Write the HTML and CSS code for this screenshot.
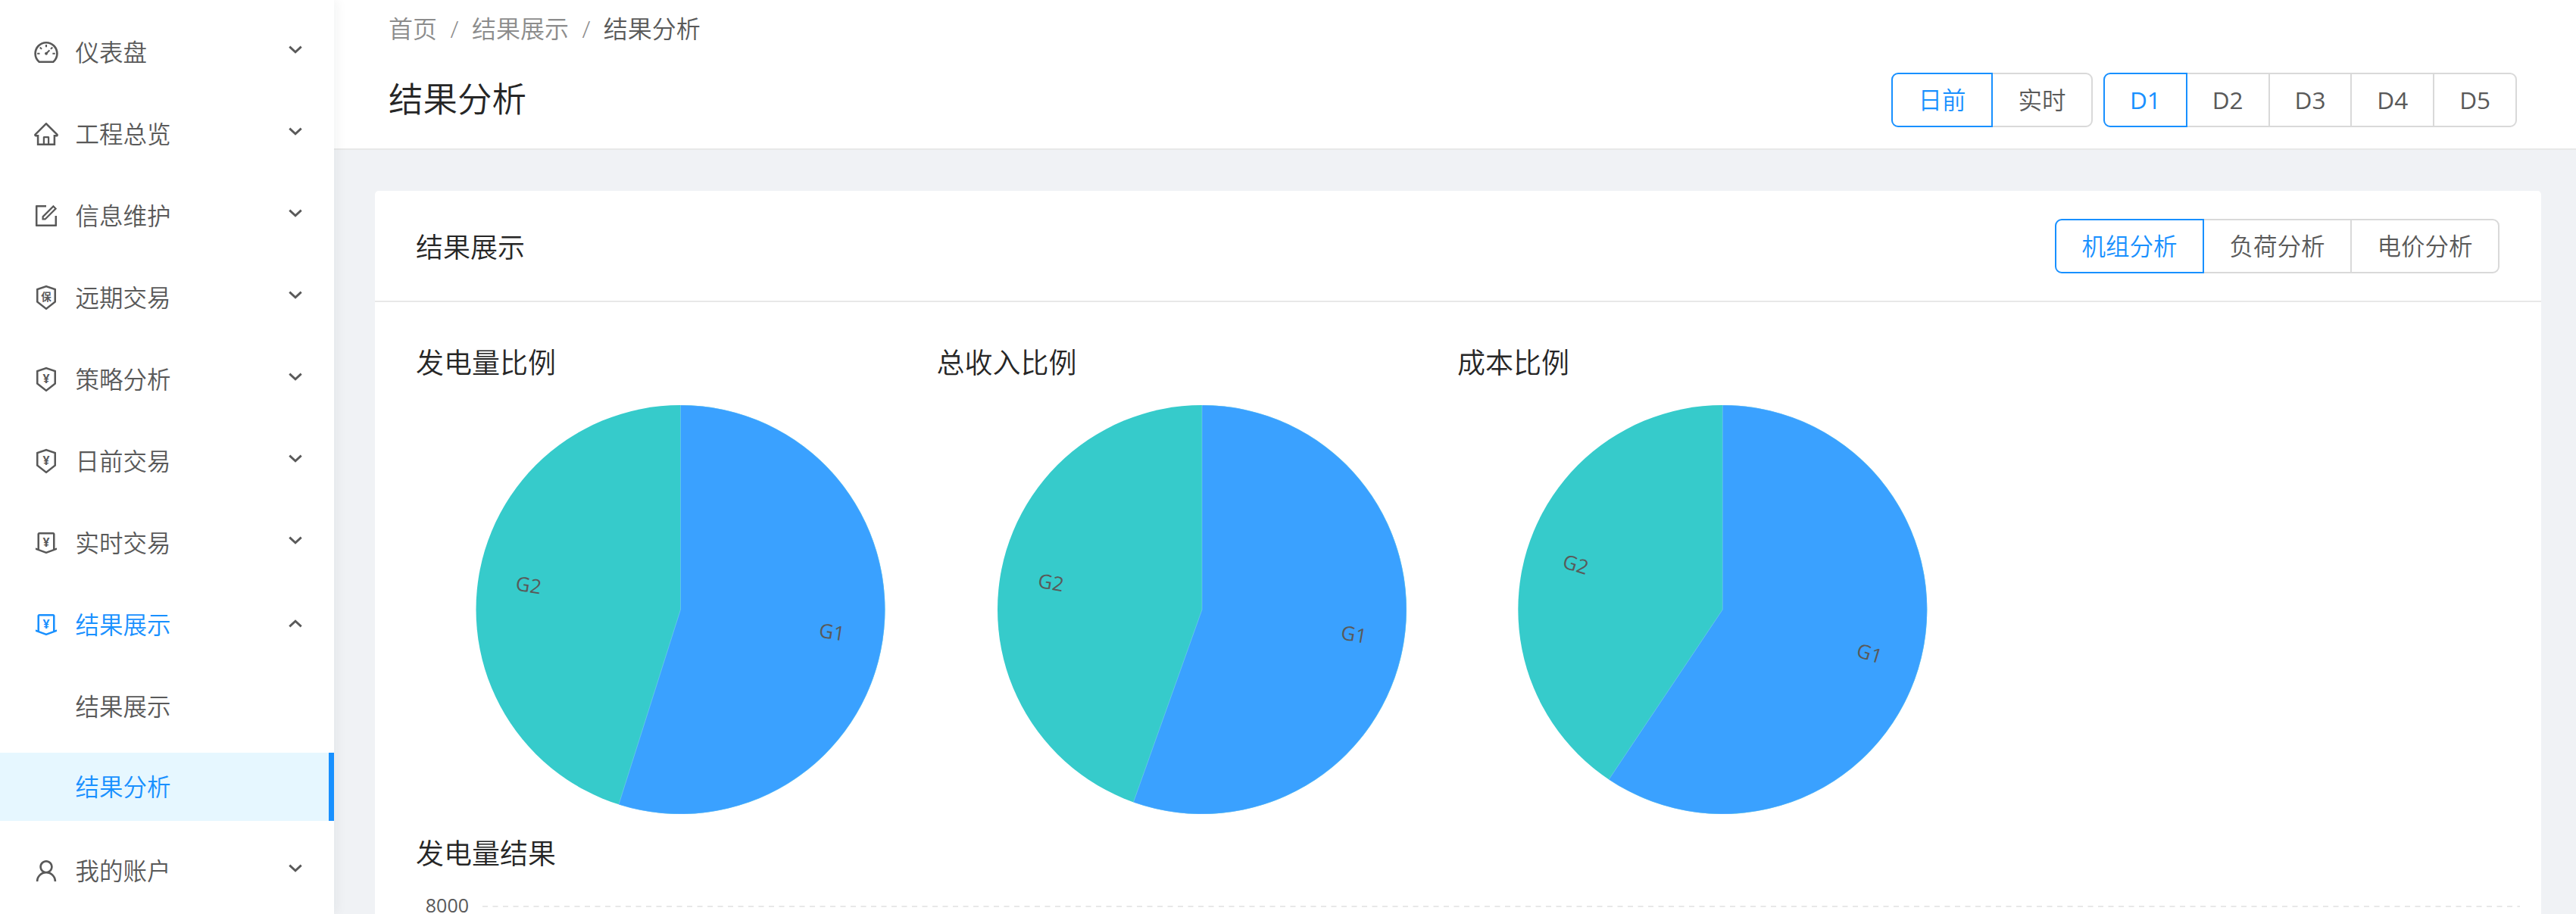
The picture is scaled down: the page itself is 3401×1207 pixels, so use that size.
FILE: index.html
```html
<!DOCTYPE html>
<html lang="en">
<head>
    <meta charset="UTF-8">
    <meta name="viewport" content="width=device-width, initial-scale=1.0">
    <title>结果分析</title>
    <link rel="stylesheet" href="styles.css">
</head>
<body>
    <!-- icon set, reused through <use> -->
    <svg class="icon-defs" xmlns="http://www.w3.org/2000/svg">
        <symbol id="i-dashboard" viewBox="0 0 1024 1024">
            <path d="M924.8 385.6a446.7 446.7 0 0 0-96-142.4 446.7 446.7 0 0 0-142.4-96C631.1 123.8 572.5 112 512 112s-119.1 11.8-174.4 35.2a446.7 446.7 0 0 0-142.4 96 446.7 446.7 0 0 0-96 142.4C75.8 440.9 64 499.5 64 560c0 132.7 58.3 257.7 159.9 343.1l1.7 1.4c5.8 4.8 13.1 7.5 20.6 7.5h531.7c7.5 0 14.8-2.7 20.6-7.5l1.7-1.4C901.7 817.7 960 692.7 960 560c0-60.5-11.9-119.1-35.2-174.4zM761.4 836H262.6A371.12 371.12 0 0 1 140 560c0-99.4 38.7-192.8 109-263 70.3-70.3 163.7-109 263-109 99.4 0 192.8 38.7 263 109 70.3 70.3 109 163.7 109 263 0 105.6-44.5 205.5-122.6 276z"/>
            <path d="M623.5 421.5a8.03 8.03 0 0 0-11.3 0L527.7 506c-18.7-5-39.4-.2-54.1 14.5a55.95 55.95 0 0 0 0 79.2 55.95 55.95 0 0 0 79.2 0 55.87 55.87 0 0 0 14.5-54.1l84.5-84.5c3.1-3.1 3.1-8.2 0-11.3l-28.3-28.3zM490 320h44c4.4 0 8-3.6 8-8v-80c0-4.4-3.6-8-8-8h-44c-4.4 0-8 3.6-8 8v80c0 4.4 3.6 8 8 8zm260 218v44c0 4.4 3.6 8 8 8h80c4.4 0 8-3.6 8-8v-44c0-4.4-3.6-8-8-8h-80c-4.4 0-8 3.6-8 8zm12.7-197.2l-31.1-31.1a8.03 8.03 0 0 0-11.3 0l-56.6 56.6a8.03 8.03 0 0 0 0 11.3l31.1 31.1c3.1 3.1 8.2 3.1 11.3 0l56.6-56.6c3.1-3.1 3.1-8.2 0-11.3zm-458.6-31.1a8.03 8.03 0 0 0-11.3 0l-31.1 31.1a8.03 8.03 0 0 0 0 11.3l56.6 56.6c3.1 3.1 8.2 3.1 11.3 0l31.1-31.1c3.1-3.1 3.1-8.2 0-11.3l-56.6-56.6zM262 530h-80c-4.4 0-8 3.6-8 8v44c0 4.4 3.6 8 8 8h80c4.4 0 8-3.6 8-8v-44c0-4.4-3.6-8-8-8z"/>
        </symbol>
        <symbol id="i-home" viewBox="0 0 1024 1024">
            <path d="M946.5 505L560.1 118.8l-25.9-25.9a31.5 31.5 0 0 0-44.4 0L77.5 505a63.9 63.9 0 0 0-18.8 46c.4 35.2 29.7 63.3 64.9 63.3h42.5V940h691.8V614.3h43.4c17.1 0 33.2-6.7 45.3-18.8a63.6 63.6 0 0 0 18.7-45.3c0-17-6.7-33.1-18.8-45.2zM568 868H456V664h112v204zm217.9-325.7V868H632V640c0-22.1-17.9-40-40-40H432c-22.1 0-40 17.9-40 40v228H238.1V542.3h-96l370-369.7 23.1 23.1L882 542.3h-96.1z"/>
        </symbol>
        <symbol id="i-form" viewBox="0 0 1024 1024">
            <path d="M904 512h-56c-4.4 0-8 3.6-8 8v320H184V184h320c4.4 0 8-3.6 8-8v-56c0-4.4-3.6-8-8-8H144c-17.7 0-32 14.3-32 32v736c0 17.7 14.3 32 32 32h736c17.7 0 32-14.3 32-32V520c0-4.4-3.6-8-8-8z"/>
            <path d="M355.9 534.9L354 653.8c-.1 8.9 7.1 16.2 16 16.2h.4l118-2.9c2-.1 4-.9 5.4-2.3l415.9-415c3.1-3.1 3.1-8.2 0-11.3L785.4 114.3c-1.6-1.6-3.6-2.3-5.7-2.3s-4.1.8-5.7 2.3l-415.8 415a8.3 8.3 0 0 0-2.3 5.6zm63.5 23.6L779.7 199l45.2 45.1-360.5 359.7-45.7 1.1.7-46.4z"/>
        </symbol>
        <symbol id="i-shield-top" viewBox="0 0 1024 1024">
            <path d="M866.9 169.9L527.1 54.1C523 52.7 517.5 52 512 52s-11 .7-15.1 2.1L157.1 169.9c-8.3 2.8-15.1 12.4-15.1 21.2v482.4c0 8.8 5.7 20.4 12.6 25.9L499.3 968c3.5 2.7 8 4.1 12.6 4.1s9.2-1.4 12.6-4.1l344.7-268.6c6.9-5.4 12.6-17 12.6-25.9V191.1c.2-8.8-6.6-18.3-14.9-21.2zM810 654.3L512 886.5 214 654.3V226.7l298-101.6 298 101.6v427.6z"/>
        </symbol>
        <symbol id="i-collect" viewBox="0 0 1024 1024">
            <path d="M911.5 700.7a8 8 0 0 0-10.3-4.8L840 718.2V180c0-37.6-30.4-68-68-68H252c-37.6 0-68 30.4-68 68v538.2l-61.3-22.3c-.9-.3-1.8-.5-2.7-.5-4.4 0-8 3.6-8 8V763c0 3.3 2.1 6.3 5.3 7.5L501 910.1c7.1 2.6 14.8 2.6 21.9 0l383.8-139.5c3.2-1.2 5.3-4.2 5.3-7.5v-59.6c0-1-.2-1.9-.5-2.8zM512 837.5l-256-93.1V184h512v560.4l-256 93.1z"/>
        </symbol>
        <symbol id="i-user" viewBox="0 0 1024 1024">
            <path d="M858.5 763.6a374 374 0 0 0-80.6-119.5 375.63 375.63 0 0 0-119.5-80.6c-.4-.2-.8-.3-1.2-.5C719.5 518 760 444.7 760 362c0-137-111-248-248-248S264 225 264 362c0 82.7 40.5 156 102.8 201.1-.4.2-.8.3-1.2.5-44.8 18.9-85 46-119.5 80.6a375.63 375.63 0 0 0-80.6 119.5A371.7 371.7 0 0 0 136 901.8a8 8 0 0 0 8 8.2h60c4.4 0 7.9-3.5 8-7.8 2-77.2 33-149.5 87.8-204.3 56.7-56.7 132-87.9 212.2-87.9s155.5 31.2 212.2 87.9C779 752.7 810 825 812 902.2c.1 4.4 3.6 7.8 8 7.8h60a8 8 0 0 0 8-8.2c-1-47.8-10.9-94.3-29.5-138.2zM512 534c-45.9 0-89.1-17.9-121.6-50.4S340 407.9 340 362c0-45.9 17.9-89.1 50.4-121.6S466.1 190 512 190s89.1 17.9 121.6 50.4S684 316.1 684 362c0 45.9-17.9 89.1-50.4 121.6S557.9 534 512 534z"/>
        </symbol>
        <symbol id="i-down" viewBox="0 0 16 10">
            <polyline points="1,1.5 8,8 15,1.5" fill="none" stroke="currentColor" stroke-width="2.6"/>
        </symbol>
        <symbol id="i-up" viewBox="0 0 16 10">
            <polyline points="1,8.5 8,2 15,8.5" fill="none" stroke="currentColor" stroke-width="2.6"/>
        </symbol>
    </svg>

    <div class="app">
        <aside class="sidebar">
            <nav class="menu">
                <div class="menu-row">
                    <svg class="menu-icon"><use href="#i-dashboard"/></svg>
                    <span class="menu-label">仪表盘</span>
                    <svg class="menu-arrow"><use href="#i-down"/></svg>
                </div>
                <div class="menu-row">
                    <svg class="menu-icon"><use href="#i-home"/></svg>
                    <span class="menu-label">工程总览</span>
                    <svg class="menu-arrow"><use href="#i-down"/></svg>
                </div>
                <div class="menu-row">
                    <svg class="menu-icon"><use href="#i-form"/></svg>
                    <span class="menu-label">信息维护</span>
                    <svg class="menu-arrow"><use href="#i-down"/></svg>
                </div>
                <div class="menu-row">
                    <svg class="menu-icon" viewBox="0 0 32 32"><use href="#i-shield-top" width="32" height="32"/><text class="icon-char icon-char-small" x="16" y="19.5">保</text></svg>
                    <span class="menu-label">远期交易</span>
                    <svg class="menu-arrow"><use href="#i-down"/></svg>
                </div>
                <div class="menu-row">
                    <svg class="menu-icon" viewBox="0 0 32 32"><use href="#i-shield-top" width="32" height="32"/><text class="icon-char" x="16" y="20.5">¥</text></svg>
                    <span class="menu-label">策略分析</span>
                    <svg class="menu-arrow"><use href="#i-down"/></svg>
                </div>
                <div class="menu-row">
                    <svg class="menu-icon" viewBox="0 0 32 32"><use href="#i-shield-top" width="32" height="32"/><text class="icon-char" x="16" y="20.5">¥</text></svg>
                    <span class="menu-label">日前交易</span>
                    <svg class="menu-arrow"><use href="#i-down"/></svg>
                </div>
                <div class="menu-row">
                    <svg class="menu-icon" viewBox="0 0 32 32"><use href="#i-collect" width="32" height="32"/><text class="icon-char" x="16" y="20.5">¥</text></svg>
                    <span class="menu-label">实时交易</span>
                    <svg class="menu-arrow"><use href="#i-down"/></svg>
                </div>
                <div class="menu-row menu-row-open">
                    <svg class="menu-icon" viewBox="0 0 32 32"><use href="#i-collect" width="32" height="32"/><text class="icon-char" x="16" y="20.5">¥</text></svg>
                    <span class="menu-label">结果展示</span>
                    <svg class="menu-arrow menu-arrow-up"><use href="#i-up"/></svg>
                </div>
                <div class="menu-sub">
                    <div class="menu-row sub-row">
                        <span class="menu-label">结果展示</span>
                    </div>
                    <div class="menu-row sub-row sub-row-active">
                        <span class="menu-label">结果分析</span>
                    </div>
                </div>
                <div class="menu-row">
                    <svg class="menu-icon"><use href="#i-user"/></svg>
                    <span class="menu-label">我的账户</span>
                    <svg class="menu-arrow"><use href="#i-down"/></svg>
                </div>
            </nav>
        </aside>

        <div class="main">
            <header class="page-header">
                <div class="breadcrumb">
                    <span>首页</span><span class="crumb-sep">/</span><span>结果展示</span><span class="crumb-sep">/</span><span class="crumb-last">结果分析</span>
                </div>
                <div class="title-row">
                    <h1 class="page-title">结果分析</h1>
                    <div class="toolbar">
                        <div class="btn-group">
                            <span class="btn btn-active">日前</span>
                            <span class="btn">实时</span>
                        </div>
                        <div class="btn-group">
                            <span class="btn btn-day btn-active">D1</span>
                            <span class="btn btn-day">D2</span>
                            <span class="btn btn-day">D3</span>
                            <span class="btn btn-day">D4</span>
                            <span class="btn btn-day">D5</span>
                        </div>
                    </div>
                </div>
            </header>

            <section class="content">
                <div class="card">
                    <div class="card-head">
                        <span class="card-title">结果展示</span>
                        <div class="btn-group">
                            <span class="btn btn-wide btn-active">机组分析</span>
                            <span class="btn btn-wide">负荷分析</span>
                            <span class="btn btn-wide">电价分析</span>
                        </div>
                    </div>
                    <div class="card-body">
                        <div class="pie-grid">
                            <div class="pie-col">
                                <div class="section-title">发电量比例</div>
                                <svg class="pie" viewBox="-349.5 -280 687.5 560">
                                    <circle class="slice-b" r="270"/>
                                    <path class="slice-a" d="M0 0L0 -270A270 270 0 1 1 -81.6 257.4Z"/>
                                    <text class="pie-label" transform="translate(200 29) rotate(8.8)">G1</text>
                                    <text class="pie-label" transform="translate(-200.5 -33) rotate(8.8)">G2</text>
                                </svg>
                            </div>
                            <div class="pie-col">
                                <div class="section-title">总收入比例</div>
                                <svg class="pie" viewBox="-350 -280 687.5 560">
                                    <circle class="slice-b" r="270"/>
                                    <path class="slice-a" d="M0 0L0 -270A270 270 0 1 1 -90.6 254.4Z"/>
                                    <text class="pie-label" transform="translate(200.6 32) rotate(9.8)">G1</text>
                                    <text class="pie-label" transform="translate(-199.4 -36.5) rotate(9.8)">G2</text>
                                </svg>
                            </div>
                            <div class="pie-col">
                                <div class="section-title">成本比例</div>
                                <svg class="pie" viewBox="-350.3 -280 687.5 560">
                                    <circle class="slice-b" r="270"/>
                                    <path class="slice-a" d="M0 0L0 -270A270 270 0 1 1 -150.2 224.4Z"/>
                                    <text class="pie-label" transform="translate(194.2 57) rotate(16.9)">G1</text>
                                    <text class="pie-label" transform="translate(-193.8 -60.5) rotate(16.9)">G2</text>
                                </svg>
                            </div>
                        </div>
                        <div class="section-title">发电量结果</div>
                        <svg class="bar-chart" viewBox="0 0 2790 53">
                            <text class="axis-label" x="70" y="41">8000</text>
                            <line class="grid-line" x1="88" y1="43" x2="2778" y2="43"/>
                        </svg>
                    </div>
                </div>
            </section>
        </div>
    </div>
</body>
</html>
```

FILE: styles.css
```css
* {
    box-sizing: border-box;
}
html, body {
    height: 100%;
}
body {
    margin: 0;
    overflow: hidden;
    background-color: #f0f2f5;
    font-family: "Open Sans", "Noto Sans CJK SC", sans-serif;
    font-size: 31.5px;
    font-weight: 350;
    color: #595959;
}
.icon-defs {
    display: none;
}
.app {
    display: flex;
    height: 100%;
}

/* sidebar */
.sidebar {
    flex: 0 0 441px;
    background-color: #fff;
    box-shadow: 4px 0 14px rgba(29, 35, 41, .05);
    z-index: 1;
}
.menu {
    padding-top: 24px;
}
.menu-row {
    display: flex;
    align-items: center;
    height: 90px;
    margin-bottom: 18px;
    padding-left: 43px;
}
.menu-icon {
    flex: 0 0 36px;
    width: 36px;
    height: 36px;
    margin-right: 20.5px;
    fill: #595959;
}
.icon-char {
    font-family: "Noto Sans", sans-serif;
    font-size: 14px;
    font-weight: 700;
    text-anchor: middle;
}
.icon-char-small {
    font-family: "Noto Sans CJK SC", sans-serif;
    font-size: 12px;
}
.menu-label {
    line-height: 90px;
}
.menu-arrow {
    width: 18px;
    height: 11px;
    margin-left: auto;
    margin-right: 42px;
    margin-bottom: 8px;
    color: #595959;
}
.menu-arrow-up {
    margin-bottom: 3px;
}
.menu-row-open,
.menu-row-open .menu-icon {
    color: #1890ff;
    fill: #1890ff;
}
.menu-row-open .menu-arrow-up {
    color: #595959;
}
.sub-row {
    padding-left: 99.5px;
    margin-bottom: 16px;
}
.sub-row-active {
    margin-bottom: 21px;
    background-color: #e6f7ff;
    border-right: 7px solid #1890ff;
    color: #1890ff;
}

/* header */
.main {
    flex: 1;
    min-width: 0;
}
.page-header {
    height: 198px;
    padding: 14px 78px 0 72px;
    background-color: #fff;
    border-bottom: 2px solid #e8e8e8;
}
.breadcrumb {
    font-size: 32px;
    line-height: 48px;
    color: #8c8c8c;
}
.crumb-sep {
    margin: 0 17.5px;
}
.crumb-last {
    color: #595959;
}
.title-row {
    display: flex;
    justify-content: space-between;
    align-items: center;
    height: 132px;
    margin-top: 2px;
}
.page-title {
    margin: 0;
    font-size: 45.5px;
    font-weight: 350;
    line-height: 64px;
    color: #262626;
}
.toolbar {
    display: flex;
    gap: 14px;
    margin-top: 3px;
}

/* button groups */
.btn-group {
    display: flex;
}
.btn {
    height: 72px;
    padding: 0 33.5px;
    margin-left: -2px;
    line-height: 68px;
    background-color: #fff;
    border: 2px solid #d9d9d9;
    color: #595959;
}
.btn-day {
    width: 110.8px;
    padding: 0;
    text-align: center;
    font-weight: 400;
}
.btn:first-child {
    margin-left: 0;
    border-radius: 9px 0 0 9px;
}
.btn:last-child {
    border-radius: 0 9px 9px 0;
}
.btn-active {
    position: relative;
    border-color: #1890ff;
    color: #1890ff;
}

/* content */
.content {
    padding: 54px 46px 0 54px;
}
.card {
    min-height: 1100px;
    background-color: #fff;
    border-radius: 5px;
}
.card-head {
    display: flex;
    justify-content: space-between;
    align-items: center;
    height: 147px;
    padding: 0 55px 0 54px;
    border-bottom: 2px solid #e8e8e8;
}
.card-title {
    font-size: 36px;
    color: #262626;
}
.card-body {
    padding: 53px 0 0 54px;
}
.pie-grid {
    display: grid;
    grid-template-columns: repeat(4, 687.5px);
}
.section-title {
    font-size: 37px;
    line-height: 54px;
    color: #262626;
}
.pie {
    display: block;
    width: 687.5px;
    height: 560px;
    margin-top: 19px;
    margin-bottom: 15px;
}
.slice-a {
    fill: #3aa1ff;
    stroke: rgba(255, 255, 255, .2);
    stroke-width: 1;
}
.slice-b {
    fill: #36cbcb;
}
.pie-label {
    font-family: "Open Sans", sans-serif;
    font-size: 26px;
    font-weight: 400;
    fill: #595959;
    text-anchor: middle;
    dominant-baseline: central;
}
.bar-chart {
    display: block;
    width: 2790px;
    height: 53px;
}
.axis-label {
    font-size: 25px;
    font-weight: 400;
    fill: #595959;
    text-anchor: end;
    dominant-baseline: central;
}
.grid-line {
    stroke: #e8e8e8;
    stroke-width: 2;
    stroke-dasharray: 7 6.5;
}
```
